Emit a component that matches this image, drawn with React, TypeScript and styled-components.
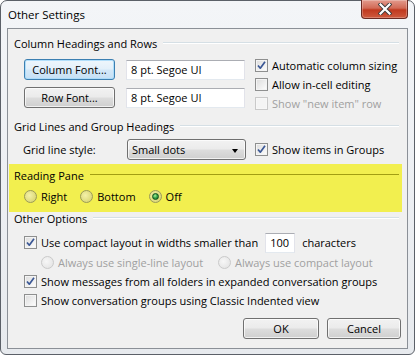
import styled, { createGlobalStyle } from "styled-components";

const GlobalStyle = createGlobalStyle`
  html, body {
    margin: 0;
    padding: 0;
    background: #ffffff;
  }
  body {
    font-family: "Segoe UI", "Open Sans", "Noto Sans", sans-serif;
    font-size: 11px;
    color: #000000;
  }
  * {
    box-sizing: border-box;
  }
`;

const Window = styled.div`
  width: 415px;
  height: 355px;
  display: flex;
  flex-direction: column;
  padding: 0 6px 5px 6px;
  border: 1px solid #5b6068;
  border-radius: 7px 7px 6px 6px;
  background: linear-gradient(#f3f5f8, #e7eaee);
`;

const TitleBar = styled.div`
  height: 27px;
  display: flex;
  align-items: flex-start;
  justify-content: space-between;
`;

const Title = styled.div`
  padding: 6px 0 0 1px;
  line-height: 16px;
  font-size: 11.5px;
`;

const CloseButton = styled.div`
  width: 47px;
  height: 19px;
  margin-top: -1px;
  display: flex;
  align-items: center;
  justify-content: center;
  border: 1px solid #6b2a22;
  border-top: none;
  border-radius: 0 0 4px 4px;
  background: linear-gradient(#e39b8d 0%, #d26a56 45%, #c0391f 55%, #cf5a3e 100%);
  box-shadow: inset 0 0 0 1px rgba(255, 255, 255, 0.25);
`;

const Client = styled.div`
  flex: 1;
  display: flex;
  flex-direction: column;
  padding-top: 8px;
  border: 1px solid #8b9097;
  background: #f0f0f0;
`;

const GroupHeader = styled.div<{ $highlight?: boolean }>`
  height: 12px;
  display: flex;
  align-items: center;
  padding-left: ${({ $highlight }) => ($highlight ? "5px" : "6px")};
  margin-right: ${({ $highlight }) => ($highlight ? "3px" : "8px")};
  white-space: nowrap;
`;

const HeaderLine = styled.div<{ $highlight?: boolean }>`
  flex: 1;
  height: 2px;
  margin-left: 6px;
  border-top: 1px solid ${({ $highlight }) => ($highlight ? "#a29e12" : "#d5dfe5")};
  border-bottom: 1px solid ${({ $highlight }) => ($highlight ? "transparent" : "#ffffff")};
`;

const ColumnBody = styled.div`
  display: flex;
  margin-top: 7px;
  padding-left: 16px;
`;

const FontColumn = styled.div`
  display: flex;
  flex-direction: column;
  gap: 7px;
  padding-top: 3px;
`;

const FontRow = styled.div`
  display: flex;
  align-items: center;
  gap: 11px;
`;

const CheckColumn = styled.div`
  display: flex;
  flex-direction: column;
  margin-left: 10px;
`;

const Button = styled.div<{ $width: number; $focused?: boolean }>`
  width: ${({ $width }) => $width}px;
  height: 21px;
  display: flex;
  align-items: center;
  justify-content: center;
  border: 1px solid ${({ $focused }) => ($focused ? "#3c7fb1" : "#707070")};
  border-radius: 3px;
  background: ${({ $focused }) =>
    $focused
      ? "linear-gradient(#eef6fc 0%, #e3f0fa 48%, #d3e8f8 52%, #c6e0f5 100%)"
      : "linear-gradient(#f2f2f2 0%, #ebebeb 48%, #dddddd 52%, #cfcfcf 100%)"};
  box-shadow: inset 0 0 0 1px ${({ $focused }) => ($focused ? "rgba(170, 220, 250, 0.9)" : "rgba(255, 255, 255, 0.7)")};
  line-height: 16px;
`;

const TextBox = styled.div<{ $width: number }>`
  width: ${({ $width }) => $width}px;
  height: 20px;
  display: flex;
  align-items: center;
  padding-left: 4px;
  background: #ffffff;
  border: 1px solid #e2e3ea;
  border-top-color: #abadb3;
  border-bottom-color: #e3e9ef;
`;

const Row = styled.div<{ $indent: number; $height: number }>`
  display: flex;
  align-items: center;
  height: ${({ $height }) => $height}px;
  padding-left: ${({ $indent }) => $indent}px;
  white-space: nowrap;
`;

const Option = styled.div<{ $width?: number; $disabled?: boolean }>`
  display: flex;
  align-items: center;
  gap: 4px;
  width: ${({ $width }) => ($width ? `${$width}px` : "auto")};
  color: ${({ $disabled }) => ($disabled ? "#a0a0a0" : "#000000")};
  white-space: nowrap;
`;

const CheckBox = styled.div<{ $disabled?: boolean }>`
  width: 13px;
  height: 13px;
  flex: none;
  display: flex;
  align-items: center;
  justify-content: center;
  border: 1px solid ${({ $disabled }) => ($disabled ? "#c9c9c9" : "#8e8f8f")};
  background: ${({ $disabled }) =>
    $disabled ? "#f4f4f4" : "linear-gradient(135deg, #dcdcdc 0%, #f0f0f0 60%, #ffffff 100%)"};
  box-shadow: inset 0 0 0 1px ${({ $disabled }) => ($disabled ? "#f7f7f7" : "#f4f4f4")};
`;

const RadioCircle = styled.div<{ $disabled?: boolean; $onBand?: boolean }>`
  width: 13px;
  height: 13px;
  flex: none;
  display: flex;
  align-items: center;
  justify-content: center;
  border-radius: 50%;
  border: 1px solid ${({ $disabled, $onBand }) => ($disabled ? "#cacaca" : $onBand ? "#9a9a5a" : "#8e8f8f")};
  background: ${({ $disabled, $onBand }) =>
    $disabled
      ? "radial-gradient(circle at 40% 40%, #f7f7f7, #e0e0e0)"
      : $onBand
        ? "radial-gradient(circle at 40% 40%, #f4f1a8, #d3cf66)"
        : "radial-gradient(circle at 40% 40%, #ffffff, #d6d6d6)"};
`;

const RadioDot = styled.div`
  width: 7px;
  height: 7px;
  border-radius: 50%;
  border: 1px solid #0d4f1c;
  background: radial-gradient(circle at 40% 35%, #a8f0a0 0%, #3da94a 45%, #0f6a24 100%);
`;

const SelectBox = styled.div`
  width: 119px;
  height: 21px;
  display: flex;
  align-items: center;
  justify-content: space-between;
  padding: 0 7px 0 4px;
  margin-right: 9px;
  border: 1px solid #707070;
  border-radius: 3px;
  background: linear-gradient(#f2f2f2 0%, #ebebeb 48%, #dddddd 52%, #cfcfcf 100%);
  box-shadow: inset 0 0 0 1px rgba(255, 255, 255, 0.7);
`;

const Arrow = styled.div`
  width: 0;
  height: 0;
  margin-top: 2px;
  border-left: 3.5px solid transparent;
  border-right: 3.5px solid transparent;
  border-top: 4px solid #000000;
`;

const FieldLabel = styled.div`
  width: 104px;
`;

const Band = styled.div`
  height: 48px;
  margin: 4px 5px 0 1px;
  padding-top: 5px;
  background: #f2ef4f;
`;

const RadioRow = styled.div`
  display: flex;
  align-items: center;
  gap: 13px;
  height: 18px;
  margin-top: 6px;
  padding-left: 15px;
`;

const Spacer = styled.div<{ $size: number }>`
  height: ${({ $size }) => $size}px;
  flex: none;
`;

const Gap = styled.span<{ $size: number }>`
  display: inline-block;
  width: ${({ $size }) => $size}px;
`;

const Footer = styled.div`
  display: flex;
  justify-content: flex-end;
  gap: 8px;
  margin-top: 8px;
  padding-right: 6px;
`;

function Check({ checked, disabled }: { checked?: boolean; disabled?: boolean }) {
  return (
    <CheckBox $disabled={disabled}>
      {checked && (
        <svg width="11" height="11" viewBox="0 0 11 11">
          <path d="M2 5.5 L4.3 8.2 L9 1.8" fill="none" stroke="#3a5795" strokeWidth="1.7" strokeLinejoin="round" />
        </svg>
      )}
    </CheckBox>
  );
}

function CheckItem({ label, checked, disabled }: { label: string; checked?: boolean; disabled?: boolean }) {
  return (
    <Option $disabled={disabled}>
      <Check checked={checked} disabled={disabled} />
      <span>{label}</span>
    </Option>
  );
}

function RadioItem({
  label,
  selected,
  disabled,
  onBand,
  width,
}: {
  label: string;
  selected?: boolean;
  disabled?: boolean;
  onBand?: boolean;
  width?: number;
}) {
  return (
    <Option $disabled={disabled} $width={width}>
      <RadioCircle $disabled={disabled} $onBand={onBand}>
        {selected && <RadioDot />}
      </RadioCircle>
      <span>{label}</span>
    </Option>
  );
}

function Header({ text, highlight }: { text: string; highlight?: boolean }) {
  return (
    <GroupHeader $highlight={highlight}>
      <span>{text}</span>
      <HeaderLine $highlight={highlight} />
    </GroupHeader>
  );
}

function App() {
  return (
    <>
      <GlobalStyle />
      <Window>
        <TitleBar>
          <Title>Other Settings</Title>
          <CloseButton>
            <svg width="14" height="12" viewBox="0 0 14 12">
              <path d="M2.5 1.5 L11.5 10.5 M11.5 1.5 L2.5 10.5" stroke="#3b3b3b" strokeWidth="4" strokeLinecap="square" />
              <path d="M2.5 1.5 L11.5 10.5 M11.5 1.5 L2.5 10.5" stroke="#ffffff" strokeWidth="2.2" strokeLinecap="square" />
            </svg>
          </CloseButton>
        </TitleBar>
        <Client>
          <Header text="Column Headings and Rows" />
          <ColumnBody>
            <FontColumn>
              <FontRow>
                <Button $width={91} $focused>
                  Column Font...
                </Button>
                <TextBox $width={119}>8 pt. Segoe UI</TextBox>
              </FontRow>
              <FontRow>
                <Button $width={91}>Row Font...</Button>
                <TextBox $width={119}>8 pt. Segoe UI</TextBox>
              </FontRow>
            </FontColumn>
            <CheckColumn>
              <Row $indent={0} $height={19}>
                <CheckItem label="Automatic column sizing" checked />
              </Row>
              <Row $indent={0} $height={19}>
                <CheckItem label="Allow in-cell editing" />
              </Row>
              <Row $indent={0} $height={19}>
                <CheckItem label={'Show "new item" row'} disabled />
              </Row>
            </CheckColumn>
          </ColumnBody>

          <Spacer $size={7} />
          <Header text="Grid Lines and Group Headings" />
          <Spacer $size={7} />
          <Row $indent={15} $height={21}>
            <FieldLabel>Grid line style:</FieldLabel>
            <SelectBox>
              <span>Small dots</span>
              <Arrow />
            </SelectBox>
            <CheckItem label="Show items in Groups" checked />
          </Row>

          <Band>
            <Header text="Reading Pane" highlight />
            <RadioRow>
              <RadioItem label="Right" onBand />
              <RadioItem label="Bottom" onBand />
              <RadioItem label="Off" onBand selected />
            </RadioRow>
          </Band>

          <Header text="Other Options" />
          <Spacer $size={8} />
          <Row $indent={16} $height={21}>
            <CheckItem label="Use compact layout in widths smaller than" checked />
            <Gap $size={7} />
            <TextBox $width={30}>100</TextBox>
            <Gap $size={7} />
            <span>characters</span>
          </Row>
          <Row $indent={33} $height={19}>
            <RadioItem label="Always use single-line layout" disabled width={177} />
            <RadioItem label="Always use compact layout" disabled />
          </Row>
          <Row $indent={16} $height={19}>
            <CheckItem label="Show messages from all folders in expanded conversation groups" checked />
          </Row>
          <Row $indent={16} $height={19}>
            <CheckItem label="Show conversation groups using Classic Indented view" />
          </Row>

          <Footer>
            <Button $width={76}>OK</Button>
            <Button $width={74}>Cancel</Button>
          </Footer>
        </Client>
      </Window>
    </>
  );
}

export default App;
